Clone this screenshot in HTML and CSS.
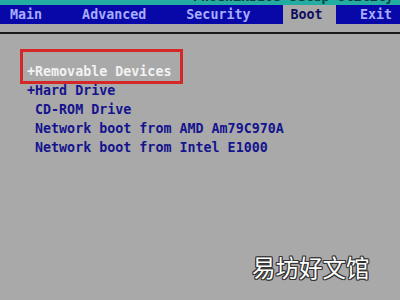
FILE: index.html
```html
<!DOCTYPE html>
<html>
<head>
<meta charset="utf-8">
<link rel="stylesheet" href="styles.css">
</head>
<body>
<div class="screen">
  <div class="title"><div class="title-text">PhoenixBIOS Setup Utility</div></div>
  <div class="menubar">
    <div class="tab">Main</div>
    <div class="tab">Advanced</div>
    <div class="tab">Security</div>
    <div class="tab active">Boot</div>
    <div class="tab exit">Exit</div>
  </div>
  <div class="rule"></div>
  <div class="content">
    <div class="list">
      <div class="item selected">+Removable Devices</div>
      <div class="item">+Hard Drive</div>
      <div class="item"> CD-ROM Drive</div>
      <div class="item"> Network boot from AMD Am79C970A</div>
      <div class="item"> Network boot from Intel E1000</div>
    </div>
    <div class="highlight"></div>
  </div>
  <div class="watermark">易坊好文馆</div>
</div>
</body>
</html>
```
FILE: styles.css
```css
html, body {
  margin: 0;
  padding: 0;
}
body {
  background: #a9a9a9;
  width: 400px;
  height: 300px;
  overflow: hidden;
  font-family: "DejaVu Sans Mono", "Liberation Mono", monospace;
  font-weight: bold;
  font-size: 13.33px;
}
.screen {
  position: relative;
  width: 400px;
  height: 300px;
}
.title {
  height: 5px;
  background: #22aca2;
  overflow: hidden;
}
.title-text {
  margin-top: -10px;
  padding-left: 193px;
  line-height: 14px;
  color: #0b3f3c;
  white-space: pre;
}
.menubar {
  display: flex;
  height: 19px;
  background: #0808a8;
  padding-left: 2px;
  gap: 24px;
}
.tab {
  padding: 0 8px;
  line-height: 19px;
  color: #a8acff;
}
.tab.active {
  background: #a9a9a9;
  color: #10105e;
  width: 39px;
}
.tab.exit {
  margin-left: -8px;
}
.rule {
  margin-top: 8px;
  height: 2px;
  background: #1a1a1a;
}
.content {
  position: relative;
  padding-top: 28px;
}
.list {
  padding-left: 27px;
}
.item {
  line-height: 19px;
  white-space: pre;
  color: #14148e;
}
.item.selected {
  color: #f2f2f2;
}
.highlight {
  position: absolute;
  left: 20px;
  top: 15px;
  width: 157px;
  height: 29px;
  border: 3px solid #d42828;
}
.watermark {
  position: absolute;
  left: 252px;
  top: 250px;
  font-family: "Noto Sans CJK SC", sans-serif;
  font-weight: normal;
  font-size: 23.5px;
  line-height: 34px;
  color: #ffffff;
  text-shadow: 1px 0 0 #333, -1px 0 0 #333, 0 1px 0 #333, 0 -1px 0 #333, 1px 1px 0 #333, -1px -1px 0 #333, 1px -1px 0 #333, -1px 1px 0 #333;
}
```
